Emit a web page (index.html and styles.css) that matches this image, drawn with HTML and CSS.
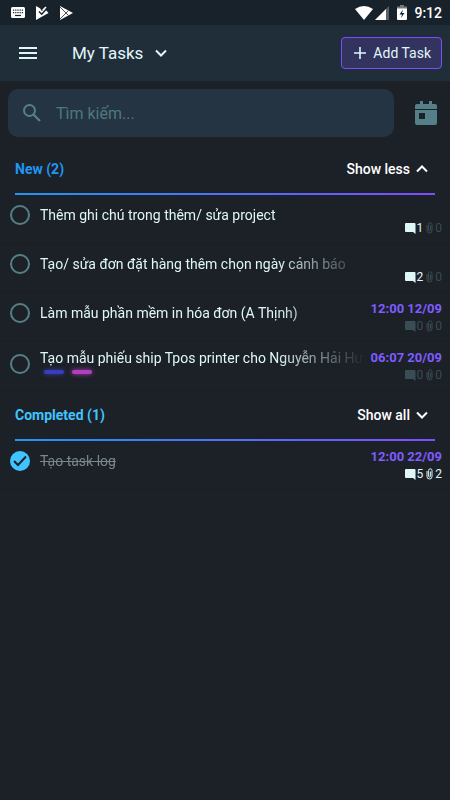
FILE: index.html
```html
<!DOCTYPE html>
<html lang="vi">
<head>
<meta charset="utf-8">
<meta name="viewport" content="width=device-width, initial-scale=1">
<title>My Tasks</title>
<link rel="stylesheet" href="styles.css">
</head>
<body>
<svg class="sprite" aria-hidden="true">
  <symbol id="comment" viewBox="0 0 11 11"><path d="M1 0H9.500a1 1 0 0 1 1 1V11L8 9H1a1 1 0 0 1-1-1V1a1 1 0 0 1 1-1z" fill="currentColor"/></symbol>
  <symbol id="clip" viewBox="0 0 7 12"><path d="M1 3v5.500a2.500 2.500 0 0 0 5 0V2.500a1.700 1.700 0 0 0-3.400 0v5.700a.9.9 0 0 0 1.800 0V3.500" fill="none" stroke="currentColor"/></symbol>
  <symbol id="chevron" viewBox="0 0 12 8"><path d="M1 1.500l5 5 5-5" fill="none" stroke="currentColor" stroke-width="2"/></symbol>
</svg>

<div class="status-bar">
  <div class="status-group">
    <svg width="14" height="11" viewBox="0 0 14 11"><rect width="14" height="11" rx="1.500" fill="#fff"/><path d="M2 3.200h10M2 5.600h10" stroke="#18222b" stroke-width="1.200" stroke-dasharray="1.200 1"/><path d="M4 8.500h6" stroke="#18222b" stroke-width="1.200"/></svg>
    <svg width="14" height="14" viewBox="0 0 14 14"><path d="M1 0l4 2.300 2 3L10 3l3.500 4L1 14z" fill="#fff"/><path d="M4 5.500l2.700 2.700L11 3.500" fill="none" stroke="#18222b" stroke-width="1.500"/><path d="M7.500 4.500L11 1" stroke="#fff" stroke-width="1.600"/></svg>
    <svg width="14" height="14" viewBox="0 0 14 14"><path d="M1 0l13 7-13 7z" fill="#fff"/><path d="M1 1l8.500 8.500M1 13l8.500-8.500" stroke="#4a535b" stroke-width="1"/></svg>
  </div>
  <div class="status-group status-right">
    <svg width="18" height="14" viewBox="0 0 18 14"><path d="M0 3Q9-3 18 3L9 14z" fill="#fff"/></svg>
    <svg class="signal" width="14" height="14" viewBox="0 0 14 14"><path d="M14 0v14H0z" fill="#58616a"/><path d="M11 3v11H0z" fill="#fff"/></svg>
    <svg class="battery" width="10" height="15" viewBox="0 0 10 15"><path d="M3 0h4v1.500h3V4H0V1.500h3z" fill="#737a80"/><path d="M0 3.500h10V14a1 1 0 0 1-1 1H1a1 1 0 0 1-1-1z" fill="#fff"/><path d="M6 4.500L2.500 9.500H5L4 13l3.500-5H5z" fill="#18222b"/></svg>
    <time>9:12</time>
  </div>
</div>

<header class="app-bar">
  <button class="menu-button" type="button" aria-label="Menu"><svg width="18" height="12" viewBox="0 0 18 12"><path d="M0 1h18M0 6h18M0 11h18" stroke="currentColor" stroke-width="2"/></svg></button>
  <div class="list-picker">
    <select aria-label="Task list"><option>My Tasks</option></select>
    <svg width="12" height="8"><use href="#chevron"/></svg>
  </div>
  <button class="add-button" type="button"><svg width="12" height="12" viewBox="0 0 12 12"><path d="M6 0v12M0 6h12" stroke="currentColor" stroke-width="1.600"/></svg>Add Task</button>
</header>

<main>
  <form class="search-row" role="search">
    <label class="search-box">
      <svg width="18" height="18" viewBox="0 0 18 18"><circle cx="6.500" cy="6.500" r="5.500" fill="none" stroke="currentColor" stroke-width="2"/><path d="M10.500 10.500l6.500 6.500" stroke="currentColor" stroke-width="2.200"/></svg>
      <input type="text" placeholder="Tìm kiếm..." aria-label="Tìm kiếm">
    </label>
    <button class="calendar-button" type="button" aria-label="Calendar"><svg width="22" height="25" viewBox="0 0 22 25"><path d="M2 3H5V0h3v3h6V0h3v3h3a2 2 0 0 1 2 2v3H0V5a2 2 0 0 1 2-2z" fill="currentColor"/><path fill-rule="evenodd" d="M0 9h22v13a2 2 0 0 1-2 2H2a2 2 0 0 1-2-2zM4 12v6h6v-6z" fill="currentColor"/></svg></button>
  </form>

  <section>
    <div class="section-head">
      <h2 class="new">New (2)</h2>
      <button type="button" aria-expanded="true">Show less<svg class="up" width="12" height="8"><use href="#chevron"/></svg></button>
    </div>
    <ul>
      <li>
        <input type="checkbox" id="t1">
        <div class="body"><label for="t1">Thêm ghi chú trong thêm/ sửa project</label></div>
        <div class="meta"><div class="counts"><span class="on"><svg width="11" height="11"><use href="#comment"/></svg>1</span><span class="files"><svg width="7" height="12"><use href="#clip"/></svg>0</span></div></div>
      </li>
      <li>
        <input type="checkbox" id="t2">
        <div class="body"><label for="t2">Tạo/ sửa đơn đặt hàng thêm chọn ngày cảnh báo</label></div>
        <div class="meta"><div class="counts"><span class="on"><svg width="11" height="11"><use href="#comment"/></svg>2</span><span class="files"><svg width="7" height="12"><use href="#clip"/></svg>0</span></div></div>
      </li>
      <li>
        <input type="checkbox" id="t3">
        <div class="body"><label for="t3">Làm mẫu phần mềm in hóa đơn (A Thịnh)</label></div>
        <div class="meta"><time>12:00 12/09</time><div class="counts"><span><svg width="11" height="11"><use href="#comment"/></svg>0</span><span class="files"><svg width="7" height="12"><use href="#clip"/></svg>0</span></div></div>
      </li>
      <li class="tagged">
        <input type="checkbox" id="t4">
        <div class="body"><label for="t4">Tạo mẫu phiếu ship Tpos printer cho Nguyễn Hải Hư</label><div class="tags"><i class="blue"></i><i class="pink"></i></div></div>
        <div class="meta"><time>06:07 20/09</time><div class="counts"><span><svg width="11" height="11"><use href="#comment"/></svg>0</span><span class="files"><svg width="7" height="12"><use href="#clip"/></svg>0</span></div></div>
      </li>
    </ul>
  </section>

  <section>
    <div class="section-head">
      <h2 class="completed">Completed (1)</h2>
      <button type="button" aria-expanded="false">Show all<svg width="12" height="8"><use href="#chevron"/></svg></button>
    </div>
    <ul>
      <li class="done">
        <span class="check"><input type="checkbox" id="t5" checked><svg width="14" height="12" viewBox="0 0 14 12"><path d="M1 6l4 4 8-8.500" fill="none" stroke="currentColor" stroke-width="2"/></svg></span>
        <div class="body"><label for="t5">Tạo task log</label></div>
        <div class="meta"><time>12:00 22/09</time><div class="counts"><span class="on"><svg width="11" height="11"><use href="#comment"/></svg>5</span><span class="on files"><svg width="7" height="12"><use href="#clip"/></svg>2</span></div></div>
      </li>
    </ul>
  </section>
</main>
</body>
</html>
```
FILE: styles.css
```css
* { box-sizing: border-box; }

body {
  margin: 0;
  min-height: 100vh;
  background: #1c2027;
  color: #e0f7fa;
  font-family: Roboto, "Noto Sans", sans-serif;
  font-size: 14px;
}

svg { display: block; flex: none; }
.sprite { position: absolute; width: 0; height: 0; }

button, select, input {
  margin: 0;
  padding: 0;
  border: 0;
  background: none;
  color: inherit;
  font: inherit;
}

.status-bar {
  display: flex;
  align-items: center;
  justify-content: space-between;
  height: 25px;
  padding: 0 8px 0 11px;
  background: #18222b;
  color: #fff;
}
.status-group { display: flex; align-items: center; gap: 10px; }
.status-right { gap: 2px; font-weight: 500; }
.signal { margin-right: 6px; }
.battery { margin-right: 5px; }

.app-bar {
  display: flex;
  align-items: center;
  height: 56px;
  padding: 0 8px 0 19px;
  background: #202e3a;
}
.list-picker {
  display: flex;
  align-items: center;
  gap: 11px;
  margin-left: 35px;
  font-size: 17px;
}
select { appearance: none; }
.add-button {
  display: flex;
  align-items: center;
  gap: 7px;
  height: 32px;
  margin-left: auto;
  padding: 0 10px 0 12px;
  border: 1px solid #7c4dff;
  border-radius: 4px;
  background: #32335e;
}

.search-row { display: flex; align-items: center; padding: 8px 13px 8px 8px; gap: 21px; }
.search-box {
  display: flex;
  flex: 1;
  align-items: center;
  gap: 15px;
  height: 48px;
  padding: 0 15px;
  border-radius: 10px;
  background: #253442;
  color: #558087;
  font-size: 16px;
}
.search-box input { flex: 1; min-width: 0; outline: 0; }
.search-box input::placeholder { color: #4e7880; opacity: 1; }
.calendar-button { color: #558087; }

.section-head {
  display: flex;
  align-items: center;
  justify-content: space-between;
  height: 50px;
  margin: 0 15px;
  padding-right: 7px;
  border-bottom: 2px solid;
  border-image: linear-gradient(90deg, #2196f3, #7c4dff) 1;
}
h2 { margin: 0; font-size: 14px; font-weight: 700; }
.new { color: #2196f3; }
.completed { color: #40c4ff; }
.section-head button {
  display: flex;
  align-items: center;
  gap: 6px;
  color: #fff;
  font-weight: 500;
}
.up { transform: rotate(180deg); }

ul { margin: 0; padding: 0; list-style: none; }
li {
  display: grid;
  grid-template-columns: 20px minmax(0, 1fr) 72px;
  align-items: center;
  height: 49px;
  padding: 0 8px 8px 10px;
  border-bottom: 1px solid #1a1d24;
}
li input {
  appearance: none;
  display: block;
  width: 20px;
  height: 20px;
  border: 2px solid #558087;
  border-radius: 50%;
}
.check { position: relative; color: #1c2027; }
.check svg { position: absolute; top: 4px; left: 3px; pointer-events: none; }
li input:checked { border-color: #40c4ff; background: #40c4ff; }

.body {
  padding-left: 10px;
  margin-right: 4px;
}
.body label {
  display: block;
  overflow: hidden;
  line-height: 20px;
  white-space: nowrap;
  -webkit-mask-image: linear-gradient(90deg, #000 72%, transparent);
  mask-image: linear-gradient(90deg, #000 72%, transparent);
}
.tagged { align-items: start; }
.tagged input { margin-top: 12px; }
.tagged .body { padding-top: 6px; }
.tags { display: flex; gap: 8px; padding: 2px 4px; }
.tags i { width: 20px; height: 4px; border-radius: 2px; }
.blue { background: #3a3dbb; box-shadow: 0 0 5px #3a3dbb; }
.pink { background: #b23fc0; box-shadow: 0 0 5px #b23fc0; }
.done label { color: #78878c; text-decoration: line-through; }

.meta {
  display: flex;
  flex-direction: column;
  align-items: flex-end;
  align-self: end;
}
.meta time {
  color: #7e5cff;
  font-size: 13px;
  font-weight: 700;
  line-height: 20px;
  white-space: nowrap;
}
.counts { display: flex; gap: 3px; font-size: 12px; line-height: 14px; }
.counts span { display: flex; align-items: center; gap: 1px; color: #3b4d54; }
.counts .files { gap: 2px; }
.counts .on { color: #e0f7fa; }
```
